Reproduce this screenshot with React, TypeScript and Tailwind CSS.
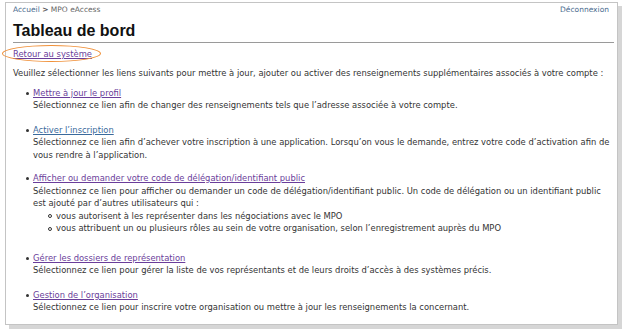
import React from 'react';

type Item = {
  label: string;
  color: string;
  lines: string[];
  subs?: string[];
  gap: string;
};

const items: Item[] = [
  {
    label: 'Mettre à jour le profil',
    color: 'text-[#6a3d9a]',
    lines: ['Sélectionnez ce lien afin de changer des renseignements tels que l’adresse associée à votre compte.'],
    gap: 'mb-[12px]',
  },
  {
    label: 'Activer l’inscription',
    color: 'text-[#3a6a9c]',
    lines: [
      'Sélectionnez ce lien afin d’achever votre inscription à une application. Lorsqu’on vous le demande, entrez votre code d’activation afin de',
      'vous rendre à l’application.',
    ],
    gap: 'mb-[11px]',
  },
  {
    label: 'Afficher ou demander votre code de délégation/identifiant public',
    color: 'text-[#6a3d9a]',
    lines: [
      'Sélectionnez ce lien pour afficher ou demander un code de délégation/identifiant public. Un code de délégation ou un identifiant public',
      'est ajouté par d’autres utilisateurs qui :',
    ],
    subs: [
      'vous autorisent à les représenter dans les négociations avec le MPO',
      'vous attribuent un ou plusieurs rôles au sein de votre organisation, selon l’enregistrement auprès du MPO',
    ],
    gap: 'mb-[17px]',
  },
  {
    label: 'Gérer les dossiers de représentation',
    color: 'text-[#6a3d9a]',
    lines: ['Sélectionnez ce lien pour gérer la liste de vos représentants et de leurs droits d’accès à des systèmes précis.'],
    gap: 'mb-[12px]',
  },
  {
    label: 'Gestion de l’organisation',
    color: 'text-[#6a3d9a]',
    lines: ['Sélectionnez ce lien pour inscrire votre organisation ou mettre à jour les renseignements la concernant.'],
    gap: '',
  },
];

export default function App() {
  return (
    <div className="w-[624px] h-[331px] bg-white pl-[5px] pt-[2px] overflow-hidden">
      <div
        className="relative w-[613px] h-[323px] border border-[#c4c4c4] bg-white shadow-[4px_4px_0_#d6d6d6] px-[7px] text-[#333] text-[8.4px] leading-[12.5px]"
        style={{ fontFamily: '"DejaVu Sans", Verdana, sans-serif' }}
      >
        {/* breadcrumbs */}
        <div className="flex justify-between items-center h-[12px] mt-[1px] text-[7.5px] text-[#4a6b8e]">
          <span>
            Accueil <span className="font-bold text-[#555]">&gt;</span> <span className="text-[#666]">MPO eAccess</span>
          </span>
          <span className="mr-[1px]">Déconnexion</span>
        </div>

        <div className="mr-[-4px] border-b border-[#9a9a9a] pb-[1px] pt-[5px]">
          <h1
            className="text-[16px] leading-[20px] font-bold text-[#111]"
            style={{ fontFamily: '"Liberation Sans", Arial, sans-serif' }}
          >
            Tableau de bord
          </h1>
        </div>

        <div className="mt-[5px] h-[12.5px]">
          <span className="text-[#6a3d9a] underline">Retour au système</span>
        </div>
        {/* orange annotation ring */}
        <div className="absolute left-[-4px] top-[42px] w-[99px] h-[17px] rounded-[50%] border-[1.5px] border-[#f0913a]" />

        <p className="mt-[6.5px] mb-[7px]">
          Veuillez sélectionner les liens suivants pour mettre à jour, ajouter ou activer des renseignements supplémentaires associés à votre compte :
        </p>

        <ul className="pl-[20px]">
          {items.map((it) => (
            <li key={it.label} className={`relative ${it.gap}`}>
              <span className="absolute left-[-7px] top-[5px] w-[3px] h-[3px] rounded-full bg-[#333]" />
              <span className={`${it.color} underline`}>{it.label}</span>
              {it.lines.map((l) => (
                <div key={l} className="whitespace-nowrap">{l}</div>
              ))}
              {it.subs && (
                <ul className="pl-[23px]">
                  {it.subs.map((s) => (
                    <li key={s} className="relative whitespace-nowrap">
                      <span className="absolute left-[-8px] top-[4.5px] w-[4px] h-[4px] rounded-full border border-[#333]" />
                      {s}
                    </li>
                  ))}
                </ul>
              )}
            </li>
          ))}
        </ul>
      </div>
    </div>
  );
}
